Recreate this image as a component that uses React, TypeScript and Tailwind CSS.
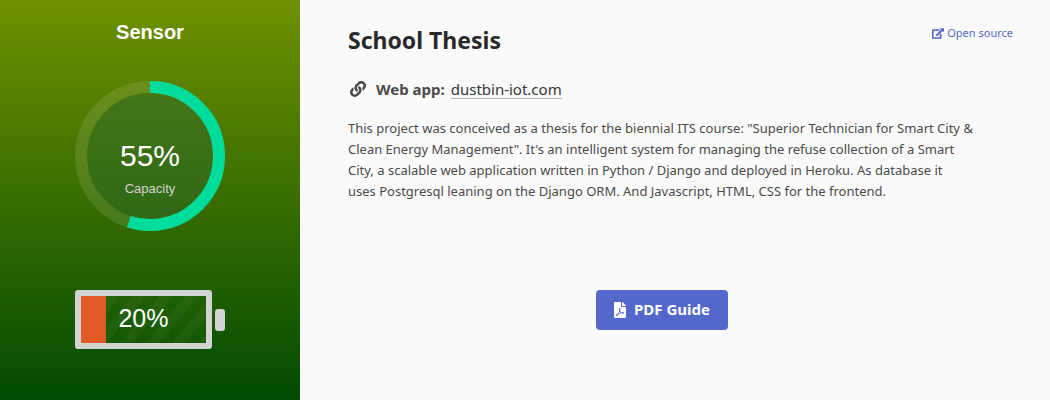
import React from "react";
import { FaFilePdf, FaLink } from "react-icons/fa";

const CAPACITY = 55;
const BATTERY = 20;

function ExternalLinkIcon({ className }: { className?: string }) {
  return (
    <svg viewBox="0 0 576 512" fill="currentColor" className={className} aria-hidden="true">
      <path
        stroke="currentColor"
        strokeWidth="20"
        d="M576 24v127.984c0 21.461-25.96 31.98-40.971 16.971l-35.707-35.709-243.523 243.523c-9.373 9.373-24.568 9.373-33.941 0l-22.627-22.627c-9.373-9.373-9.373-24.569 0-33.941L442.756 76.676l-35.703-35.705C391.982 25.9 402.656 0 424.024 0H552c13.255 0 24 10.745 24 24zM407.029 270.794l-16 16A23.999 23.999 0 0 0 384 303.765V448H64V128h264a24.003 24.003 0 0 0 16.97-7.029l16-16C376.089 89.851 365.381 64 344 64H48C21.49 64 0 85.49 0 112v352c0 26.51 21.49 48 48 48h352c26.51 0 48-21.49 48-48V287.764c0-21.382-25.852-32.09-40.971-16.97z"
      />
    </svg>
  );
}

function CapacityGauge({ value }: { value: number }) {
  return (
    <div className="grid size-[150px] place-items-center">
      <svg viewBox="0 0 150 150" className="col-start-1 row-start-1 size-full" aria-hidden="true">
        <circle cx="75" cy="75" r="63" fill="#2a6637" fillOpacity="0.4" />
        <circle cx="75" cy="75" r="69" fill="none" stroke="#ffffff" strokeOpacity="0.11" strokeWidth="12" />
        <circle
          cx="75"
          cy="75"
          r="69"
          fill="none"
          stroke="#00dc9b"
          strokeWidth="12"
          pathLength="100"
          strokeDasharray={`${value} 100`}
          transform="rotate(-90 75 75)"
        />
      </svg>
      <div className="col-start-1 row-start-1 flex flex-col items-center gap-[5px] pt-[25px]">
        <span className="text-[30px] leading-9 text-white">{value}%</span>
        <span className="text-[13px] leading-5 text-[#d3d3d3]">Capacity</span>
      </div>
    </div>
  );
}

function BatteryGauge({ value }: { value: number }) {
  return (
    <div className="flex items-center gap-[3px]">
      <div className="grid h-[59px] w-[137px] rounded-[3px] border-6 border-[#d3d3d3] bg-[repeating-linear-gradient(130deg,#ffffff0d_0px,#ffffff0d_10px,#ffffff04_10px,#ffffff04_20px)]">
        <div className="col-start-1 row-start-1 bg-[#e05a26]" style={{ width: `${value}%` }} />
        <span className="col-start-1 row-start-1 self-center pb-[3px] text-center text-[25px] leading-8 text-white">
          {value}%
        </span>
      </div>
      <div className="h-[22px] w-[10px] rounded-[3px] bg-[#d3d3d3]" />
    </div>
  );
}

export default function App() {
  return (
    <main className="flex min-h-screen bg-[#fafafa] font-['Noto_Sans',sans-serif] text-[#4a4a4a]">
      <section className="flex w-[300px] shrink-0 flex-col items-center bg-linear-to-b/srgb from-[#709000] to-[#004b00] pt-[18px] font-['Liberation_Sans',Arial,sans-serif]">
        <h2 className="mb-[35px] text-xl leading-7 font-bold text-white">Sensor</h2>
        <CapacityGauge value={CAPACITY} />
        <div className="mt-[59px]">
          <BatteryGauge value={BATTERY} />
        </div>
      </section>
      <section className="flex min-w-0 grow flex-col pr-[37px] pl-12">
        <header className="flex items-start justify-between pt-6">
          <h1 className="text-[23px] leading-8 font-bold text-[#292929]">School Thesis</h1>
          <a href="#source" className="flex items-center gap-[3px] text-[11px] leading-[18px] text-[#5468cb]">
            <ExternalLinkIcon className="h-[11px] w-3" />
            Open source
          </a>
        </header>
        <p className="mt-[21px] flex items-center text-[15px] leading-6">
          <FaLink className="mr-[10px] ml-[2px] size-4" aria-hidden="true" />
          <strong className="mr-[6px] font-bold">Web app:</strong>
          <a href="#app" className="border-b border-[#b5b5b5] leading-[18px] text-[#363636]">
            dustbin-iot.com
          </a>
        </p>
        <p className="mt-[17px] mr-8 text-[13px] leading-[21px]">
          This project was conceived as a thesis for the biennial ITS course: "Superior Technician for Smart City &amp;
          Clean Energy Management". It's an intelligent system for managing the refuse collection of a Smart City, a
          scalable web application written in Python / Django and deployed in Heroku. As database it uses&nbsp;Postgresql
          leaning on the Django ORM. And Javascript, HTML, CSS for the frontend.
        </p>
        <div className="mt-[88px] flex justify-center pr-[37px]">
          <button
            type="button"
            className="flex h-10 items-center gap-2 rounded bg-[#5468cb] px-[18px] pb-px text-[15px] font-bold text-white"
          >
            <FaFilePdf className="h-4 w-3" aria-hidden="true" />
            PDF Guide
          </button>
        </div>
      </section>
    </main>
  );
}
